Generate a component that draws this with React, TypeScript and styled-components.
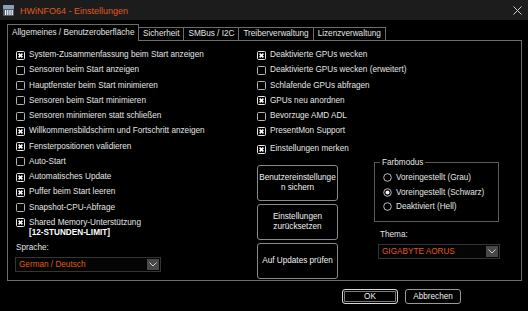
import styled, { createGlobalStyle } from 'styled-components';

const GlobalStyle = createGlobalStyle`
  html, body {
    margin: 0;
    padding: 0;
    background: #000;
  }
  body {
    font-family: 'Liberation Sans', Arial, sans-serif;
    font-size: 8.2px;
    color: #e4e4e4;
  }
`;

const ORANGE = '#e0581c';

interface IOption {
  label: string;
  checked: boolean;
}

const leftOptions: IOption[] = [
  { label: 'System-Zusammenfassung beim Start anzeigen', checked: true },
  { label: 'Sensoren beim Start anzeigen', checked: false },
  { label: 'Hauptfenster beim Start minimieren', checked: false },
  { label: 'Sensoren beim Start minimieren', checked: false },
  { label: 'Sensoren minimieren statt schließen', checked: false },
  { label: 'Willkommensbildschirm und Fortschritt anzeigen', checked: true },
  { label: 'Fensterpositionen validieren', checked: true },
  { label: 'Auto-Start', checked: false },
  { label: 'Automatisches Update', checked: true },
  { label: 'Puffer beim Start leeren', checked: true },
  { label: 'Snapshot-CPU-Abfrage', checked: false },
];

const rightOptions: IOption[] = [
  { label: 'Deaktivierte GPUs wecken', checked: true },
  { label: 'Deaktivierte GPUs wecken (erweitert)', checked: false },
  { label: 'Schlafende GPUs abfragen', checked: false },
  { label: 'GPUs neu anordnen', checked: true },
  { label: 'Bevorzuge AMD ADL', checked: false },
  { label: 'PresentMon Support', checked: true },
];

const tabs = [
  'Allgemeines / Benutzeroberfläche',
  'Sicherheit',
  'SMBus / I2C',
  'Treiberverwaltung',
  'Lizenzverwaltung',
];

const colorModes = [
  { label: 'Voreingestellt (Grau)', selected: false },
  { label: 'Voreingestellt (Schwarz)', selected: true },
  { label: 'Deaktiviert (Hell)', selected: false },
];

function CheckIcon({ checked }: { checked: boolean }) {
  return (
    <svg width="9" height="9" viewBox="0 0 9 9">
      <rect
        x="0.5"
        y="0.5"
        width="8"
        height="8"
        rx="1"
        fill="#000"
        stroke={checked ? '#e8e8e8' : '#b4b4b4'}
      />
      {checked && (
        <path
          d="M2.6 2.6 L6.4 6.4 M6.4 2.6 L2.6 6.4"
          stroke="#fff"
          strokeWidth="1.6"
        />
      )}
    </svg>
  );
}

function RadioIcon({ selected }: { selected: boolean }) {
  return (
    <svg width="9" height="9" viewBox="0 0 9 9">
      <circle cx="4.5" cy="4.5" r="3.8" fill="#000" stroke="#bdbdbd" />
      {selected && <circle cx="4.5" cy="4.5" r="2" fill="#f0f0f0" />}
    </svg>
  );
}

function Chevron() {
  return (
    <svg width="8" height="5" viewBox="0 0 8 5">
      <path d="M0.5 0.5 L4 4 L7.5 0.5" stroke="#cfcfcf" fill="none" />
    </svg>
  );
}

function Check({ label, checked }: IOption) {
  return (
    <Row>
      <BoxWrap>
        <CheckIcon checked={checked} />
      </BoxWrap>
      <RowLabel>{label}</RowLabel>
    </Row>
  );
}

function App() {
  return (
    <>
      <GlobalStyle />
      <Window>
        <TitleBar>
          <AppIcon viewBox="0 0 11 11" width="11" height="11">
            <rect x="0" y="0" width="11" height="11" rx="1" fill="#4d5d6e" />
            <rect x="0" y="0" width="11" height="4" rx="1" fill="#8aa2b8" />
            <rect x="2" y="5" width="1.2" height="5" fill="#fff" />
            <rect x="4.2" y="5" width="1.2" height="5" fill="#fff" />
            <rect x="6.4" y="5" width="1.2" height="5" fill="#fff" />
            <rect x="8.6" y="5" width="1.2" height="5" fill="#fff" />
          </AppIcon>
          <Title>HWiNFO64 - Einstellungen</Title>
          <CloseBtn viewBox="0 0 9 9" width="9" height="9">
            <path d="M0.5 0.5 L8.5 8.5 M8.5 0.5 L0.5 8.5" stroke="#cfcfcf" />
          </CloseBtn>
        </TitleBar>

        <Body>
          <TabStrip>
            {tabs.map((t, i) => (
              <Tab key={t} $active={i === 0}>
                {t}
              </Tab>
            ))}
          </TabStrip>

          <Panel>
            <LeftCol>
              {leftOptions.map((o) => (
                <Check key={o.label} {...o} />
              ))}
              <Row>
                <BoxWrap>
                  <CheckIcon checked={true} />
                </BoxWrap>
                <RowLabel>
                  Shared Memory-Unterstützung
                  <br />
                  <Strong>[12-STUNDEN-LIMIT]</Strong>
                </RowLabel>
              </Row>
              <FieldLabel $top={5}>Sprache:</FieldLabel>
              <Combo $width={146}>
                <ComboText>German / Deutsch</ComboText>
                <ComboArrow>
                  <Chevron />
                </ComboArrow>
              </Combo>
            </LeftCol>

            <RightCol>
              {rightOptions.map((o) => (
                <Check key={o.label} {...o} />
              ))}
              <Spaced>
                <Check label="Einstellungen merken" checked={true} />
              </Spaced>
              <Lower>
                <ButtonStack>
                  <ActionButton>
                    Benutzereinstellunge
                    <br />n sichern
                  </ActionButton>
                  <ActionButton>
                    Einstellungen
                    <br />
                    zurücksetzen
                  </ActionButton>
                  <ActionButton>Auf Updates prüfen</ActionButton>
                </ButtonStack>
                <SideCol>
                  <GroupBox>
                    <Legend>Farbmodus</Legend>
                    {colorModes.map((m) => (
                      <RadioRow key={m.label}>
                        <RadioIcon selected={m.selected} />
                        <span>{m.label}</span>
                      </RadioRow>
                    ))}
                  </GroupBox>
                  <FieldLabel $top={8} $left={6}>
                    Thema:
                  </FieldLabel>
                  <Combo $width={122} $left={5}>
                    <ComboText>GIGABYTE AORUS</ComboText>
                    <ComboArrow>
                      <Chevron />
                    </ComboArrow>
                  </Combo>
                </SideCol>
              </Lower>
            </RightCol>
          </Panel>

          <Footer>
            <DefaultButton>OK</DefaultButton>
            <DialogButton>Abbrechen</DialogButton>
          </Footer>
        </Body>
      </Window>
    </>
  );
}

const Window = styled.div`
  width: 528px;
  height: 311px;
  background: #000;
  overflow: hidden;
`;

const TitleBar = styled.div`
  height: 20px;
  background: #1c1c1c;
  display: flex;
  align-items: center;
  padding: 1px 6px 0 3px;
  box-sizing: border-box;
`;

const AppIcon = styled.svg`
  flex: none;
`;

const Title = styled.div`
  margin-left: 6px;
  font-size: 9px;
  color: ${ORANGE};
  flex: 1;
`;

const CloseBtn = styled.svg`
  flex: none;
`;

const Body = styled.div`
  padding: 5px 6px 0 7px;
`;

const TabStrip = styled.div`
  display: flex;
  align-items: flex-end;
  height: 16px;
  position: relative;
  z-index: 1;
  margin-bottom: -1px;
`;

const Tab = styled.div<{ $active?: boolean }>`
  box-sizing: border-box;
  height: ${({ $active }) => ($active ? '17px' : '14px')};
  padding: ${({ $active }) => ($active ? '3px 4px 0' : '1px 4px 0')};
  margin-left: -1px;
  border: 1px solid #6c6c6c;
  border-bottom: ${({ $active }) => ($active ? 'none' : '1px solid #6c6c6c')};
  background: #000;
  line-height: 10px;
  white-space: nowrap;
  &:first-child {
    margin-left: 0;
    width: 132px;
  }
`;

const Panel = styled.div`
  box-sizing: border-box;
  height: 241px;
  border: 1px solid #6c6c6c;
  display: flex;
  padding: 6.5px 8px 0;
`;

const LeftCol = styled.div`
  width: 241px;
  flex: none;
  display: flex;
  flex-direction: column;
`;

const RightCol = styled.div`
  flex: 1;
  display: flex;
  flex-direction: column;
`;

const Row = styled.div`
  display: flex;
  align-items: flex-start;
  min-height: 15.25px;
  gap: 4px;
`;

const BoxWrap = styled.div`
  flex: none;
  height: 9px;
  margin-top: 3px;
  display: flex;
`;

const RowLabel = styled.div`
  line-height: 10px;
  padding-top: 2.5px;
  white-space: nowrap;
`;

const Strong = styled.span`
  font-weight: bold;
  color: #fff;
`;

const FieldLabel = styled.div<{ $top?: number; $left?: number }>`
  line-height: 10px;
  margin-top: ${({ $top }) => $top ?? 0}px;
  margin-left: ${({ $left }) => $left ?? 0}px;
`;

const Combo = styled.div<{ $width: number; $left?: number }>`
  box-sizing: border-box;
  width: ${({ $width }) => $width}px;
  height: 15px;
  margin-top: 4px;
  margin-left: ${({ $left }) => ($left ?? 0) - 1}px;
  border: 1px solid #343434;
  background: #050505;
  display: flex;
  align-items: center;
  padding: 0 1px 0 3px;
`;

const ComboText = styled.span`
  flex: 1;
  color: ${ORANGE};
  white-space: nowrap;
`;

const ComboArrow = styled.span`
  width: 12px;
  height: 11px;
  background: #484848;
  display: flex;
  align-items: center;
  justify-content: center;
`;

const Spaced = styled.div`
  margin-top: 2.6px;
`;

const Lower = styled.div`
  display: flex;
  margin-top: 7.7px;
`;

const ButtonStack = styled.div`
  display: flex;
  flex-direction: column;
  gap: 3px;
  width: 81px;
  flex: none;
`;

const ActionButton = styled.div`
  box-sizing: border-box;
  height: 36px;
  border: 1px solid #8a8a8a;
  border-radius: 3px;
  display: flex;
  align-items: center;
  justify-content: center;
  text-align: center;
  line-height: 9.5px;
  color: #f0f0f0;
`;

const SideCol = styled.div`
  margin-left: 36px;
  width: 128px;
  display: flex;
  flex-direction: column;
  margin-top: -7px;
`;

const GroupBox = styled.fieldset`
  margin: 0;
  width: 125px;
  box-sizing: border-box;
  min-width: 0;
  border: 1px solid #5a5a5a;
  padding: 2.6px 8px 7px;
`;

const Legend = styled.legend`
  padding: 0 2px;
  margin-left: -3px;
  line-height: 10px;
`;

const RadioRow = styled.div`
  display: flex;
  align-items: center;
  gap: 4px;
  height: 14.7px;
  white-space: nowrap;
`;

const Footer = styled.div`
  display: flex;
  gap: 7px;
  padding-left: 335px;
  margin-top: 8px;
`;

const DialogButton = styled.div`
  box-sizing: border-box;
  width: 56px;
  height: 15px;
  border: 1px solid #9a9a9a;
  border-radius: 3px;
  display: flex;
  align-items: center;
  justify-content: center;
  color: #f0f0f0;
`;

const DefaultButton = styled(DialogButton)`
  border: 1px solid #d8d8d8;
  box-shadow: inset 0 0 0 1px #000, inset 0 0 0 2px #7a7a7a;
`;

export default App;
